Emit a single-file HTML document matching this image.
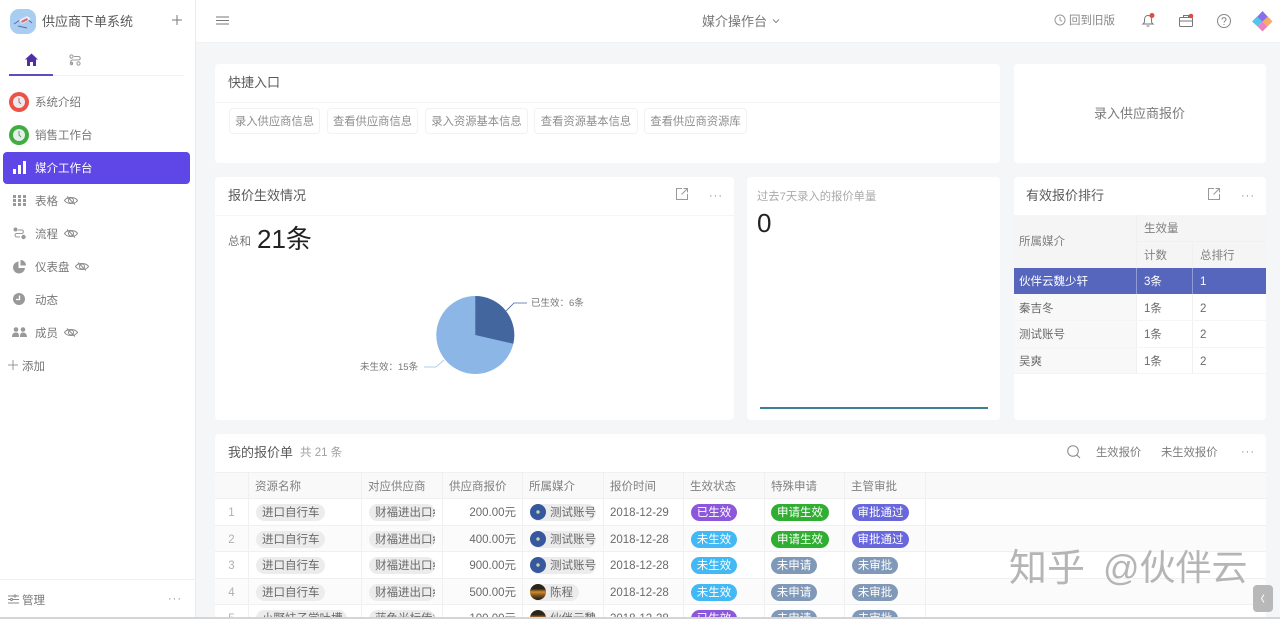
<!DOCTYPE html>
<html lang="zh"><head><meta charset="utf-8"><title>供应商下单系统</title>
<style>
*{box-sizing:border-box}
html,body{margin:0;padding:0;width:1280px;height:619px;overflow:hidden;background:#f5f6f8}
body{position:relative;font-family:"Liberation Sans","Noto Sans CJK SC",sans-serif;font-size:11.5px;color:#666;filter:blur(.3px)}
.a{position:absolute;white-space:nowrap;line-height:1}
.card{position:absolute;background:#fff;border-radius:4px}
svg{position:absolute;overflow:visible}
.nav{position:absolute;left:35px;font-size:11.5px;color:#777;line-height:14px;white-space:nowrap}
.qb{position:absolute;top:108px;height:26px;border:1px solid #f2f2f2;border-radius:4px;font-size:11.3px;color:#8e8e8e;line-height:26px;text-align:center;white-space:nowrap}
.r{position:absolute;left:215px;width:1051px;height:1px;background:#f0f0f0}
.v{position:absolute;width:1px;background:#f0f0f0}
.rowbg{position:absolute;left:215px;width:1051px;background:#fbfbfb}
.th{position:absolute;top:481px;font-size:11.5px;color:#808080;line-height:13px;white-space:nowrap}
.idx{position:absolute;left:215px;width:33px;text-align:center;color:#b0b0b0;font-size:11.5px;line-height:14px;margin-top:1px}
.pill{position:absolute;height:17px;border-radius:9px;background:#ececec;color:#6a6a6a;font-size:11.5px;line-height:18px;white-space:nowrap;overflow:hidden}
.price{position:absolute;left:442px;width:74px;text-align:right;color:#6a6a6a;font-size:11.5px;line-height:14px;margin-top:1px}
.date{position:absolute;left:610px;color:#6a6a6a;font-size:11.5px;line-height:14px;white-space:nowrap;margin-top:1px}
.tag{position:absolute;height:17px;border-radius:9px;color:#fff;font-size:11.5px;line-height:18px;text-align:center;white-space:nowrap;overflow:hidden}
.p{background:#8d57dc}.b{background:#42b8f4}.g{background:#2fae31}.i{background:#6867dc}.s{background:#8199b8}
.av{position:absolute;width:16px;height:16px;border-radius:50%;background:radial-gradient(circle,#b9d3a8 0 1.5px,#37589f 2px)}
.av2{background:linear-gradient(#2b241a 0 30%,#d78a28 50%,#6b4a22 75%,#1e1a12)}
.rk{position:absolute;font-size:11.5px;color:#6a6a6a;line-height:14px;white-space:nowrap;margin-top:1px}
</style></head><body>

<!-- top bar -->
<div style="position:absolute;left:196px;top:0;width:1084px;height:43px;background:#fff;border-bottom:1px solid #f0f1f3"></div>
<!-- sidebar -->
<div style="position:absolute;left:0;top:0;width:196px;height:619px;background:#fff;border-right:1px solid #eaebee"></div>
<div style="position:absolute;left:10px;top:9px;width:26px;height:25px;border-radius:9px;background:#a9cdf0"></div>
<svg style="left:10px;top:9px" width="26" height="25"><path d="M4 15l6-4M16 9l6 5M8 17l9 2" stroke="#5b6f9c" stroke-width="1" fill="none"/><path d="M9 11l8-4 4 3-9 5z" fill="#e9eef8"/><path d="M11 12l6-3 1 2-6 3z" fill="#d96a78"/></svg>
<div class="a" style="left:42px;top:15px;font-size:13px;color:#5a5a5a">供应商下单系统</div>
<svg style="left:171px;top:14px" width="12" height="12"><path d="M6 1v10M1 6h10" stroke="#777" stroke-width="1"/></svg>
<svg style="left:25px;top:53px" width="13" height="13"><path d="M6.500 .5L13 6.500h-2V13H8V9H5v4H2V6.500H0z" fill="#4f2fa8"/></svg>
<svg style="left:69px;top:54px" width="12" height="12" fill="none" stroke="#999" stroke-width="1"><circle cx="2.500" cy="2.500" r="1.600"/><circle cx="9.500" cy="9.500" r="1.600"/><circle cx="2.500" cy="9.500" r="1.200"/><path d="M5 2.500h4.500a1.500 1.500 0 0 1 0 3.500h-6a1.500 1.500 0 0 0 0 3.500"/></svg>
<div style="position:absolute;left:9px;top:75px;width:175px;height:1px;background:#f2f2f2"></div>
<div style="position:absolute;left:9px;top:74px;width:44px;height:2px;background:#5f4cc0"></div>

<div style="position:absolute;left:9px;top:92px;width:20px;height:20px;border-radius:50%;background:#ec5245"></div>
<div style="position:absolute;left:13px;top:96px;width:12px;height:12px;border-radius:50%;background:#e9edf0"></div>
<svg style="left:13px;top:96px" width="12" height="12"><path d="M6 2v4l2 2" stroke="#d85a50" stroke-width="1" fill="none"/></svg>
<div class="nav" style="top:96px">系统介绍</div>
<div style="position:absolute;left:9px;top:125px;width:20px;height:20px;border-radius:50%;background:#3fae3f"></div>
<div style="position:absolute;left:13px;top:129px;width:12px;height:12px;border-radius:50%;background:#e9edf0"></div>
<svg style="left:13px;top:129px" width="12" height="12"><path d="M6 2v4l2 2" stroke="#58a858" stroke-width="1" fill="none"/></svg>
<div class="nav" style="top:129px">销售工作台</div>
<div style="position:absolute;left:3px;top:152px;width:187px;height:32px;border-radius:4px;background:#5f46e6"></div>
<svg style="left:13px;top:160px" width="13" height="15" fill="#fff"><rect x="0" y="9" width="3" height="5"/><rect x="5" y="5" width="3" height="9"/><rect x="10" y="1" width="3" height="13"/></svg>
<div class="nav" style="top:162px;color:#fff">媒介工作台</div>

<svg style="left:13px;top:195px" width="13" height="11" fill="#999"><rect width="3" height="3"/><rect x="5" width="3" height="3"/><rect x="10" width="3" height="3"/><rect y="4" width="3" height="3"/><rect x="5" y="4" width="3" height="3"/><rect x="10" y="4" width="3" height="3"/><rect y="8" width="3" height="3"/><rect x="5" y="8" width="3" height="3"/><rect x="10" y="8" width="3" height="3"/></svg>
<div class="nav" style="top:195px">表格</div>
<svg style="left:64px;top:195px" width="14" height="11" fill="none" stroke="#888"><path d="M.5 5.500C3 1.500 11 1.500 13.500 5.500C11 9.500 3 9.500 .5 5.500z"/><circle cx="7" cy="5.500" r="2.500"/><path d="M3 1.500l8 8"/></svg>
<svg style="left:13px;top:227px" width="13" height="13"><circle cx="2.500" cy="2.500" r="2" fill="#999"/><circle cx="10.500" cy="10" r="2.200" fill="#999"/><path d="M5 3h4a1.800 1.800 0 0 1 0 3.500H3.500a1.800 1.800 0 0 0 0 3.500H7" stroke="#999" fill="none"/></svg>
<div class="nav" style="top:228px">流程</div>
<svg style="left:64px;top:228px" width="14" height="11" fill="none" stroke="#888"><path d="M.5 5.500C3 1.500 11 1.500 13.500 5.500C11 9.500 3 9.500 .5 5.500z"/><circle cx="7" cy="5.500" r="2.500"/><path d="M3 1.500l8 8"/></svg>
<svg style="left:13px;top:260px" width="13" height="13" fill="#999"><path d="M5.500 1.500v6.500h6.500A6 6 0 1 1 5.500 1.500z"/><path d="M7.500 0a5.500 5.500 0 0 1 5.500 5.500H7.500z"/></svg>
<div class="nav" style="top:261px">仪表盘</div>
<svg style="left:75px;top:261px" width="14" height="11" fill="none" stroke="#888"><path d="M.5 5.500C3 1.500 11 1.500 13.500 5.500C11 9.500 3 9.500 .5 5.500z"/><circle cx="7" cy="5.500" r="2.500"/><path d="M3 1.500l8 8"/></svg>
<svg style="left:13px;top:293px" width="12" height="12"><circle cx="6" cy="6" r="6" fill="#999"/><path d="M6.500 2.500V6.500H3" stroke="#fff" stroke-width="1.300" fill="none"/></svg>
<div class="nav" style="top:294px">动态</div>
<svg style="left:12px;top:327px" width="15" height="11" fill="#999"><circle cx="4" cy="2.500" r="2.300"/><circle cx="11" cy="2.500" r="2.300"/><path d="M0 10c0-3 1.500-4.500 4-4.500S7 7 7 10zM8 10c0-3 .8-4.500 3-4.500S15 7 15 10z"/></svg>
<div class="nav" style="top:327px">成员</div>
<svg style="left:64px;top:327px" width="14" height="11" fill="none" stroke="#888"><path d="M.5 5.500C3 1.500 11 1.500 13.500 5.500C11 9.500 3 9.500 .5 5.500z"/><circle cx="7" cy="5.500" r="2.500"/><path d="M3 1.500l8 8"/></svg>
<svg style="left:8px;top:360px" width="10" height="10"><path d="M5 0v10M0 5h10" stroke="#999"/></svg>
<div class="nav" style="left:22px;top:360px">添加</div>
<div style="position:absolute;left:0;top:579px;width:195px;height:1px;background:#f0f0f0"></div>
<svg style="left:8px;top:594px" width="11" height="11" stroke="#888" fill="none"><path d="M0 2h11M0 5.500h11M0 9h11"/><circle cx="7" cy="2" r="1" fill="#fff"/><circle cx="3.500" cy="5.500" r="1" fill="#fff"/></svg>
<div class="nav" style="left:22px;top:594px">管理</div>
<div class="a" style="left:168px;top:594px;font-size:11px;color:#888;letter-spacing:1px">···</div>

<!-- top bar content -->
<svg style="left:216px;top:16px" width="13" height="10" stroke="#777"><path d="M0 1h13M0 4.500h13M0 8h13"/></svg>
<div class="a" style="left:702px;top:15px;font-size:13px;color:#777">媒介操作台</div>
<svg style="left:772px;top:19px" width="8" height="5" fill="none" stroke="#888"><path d="M1 .5l3 3 3-3"/></svg>
<svg style="left:1054px;top:14px" width="12" height="12" fill="none" stroke="#999"><circle cx="6" cy="6" r="5"/><path d="M6 3v3l2 1.500"/></svg>
<div class="a" style="left:1069px;top:16px;font-size:11.5px;color:#888">回到旧版</div>
<svg style="left:1141px;top:13px" width="15" height="15" fill="none" stroke="#777"><path d="M2 11c1.500-1 1.500-2 1.500-4.500S5 2.500 7 2.500s3.500 1.500 3.500 4S10.500 10 12 11zM5.500 13h3"/><circle cx="11" cy="2.500" r="2.500" fill="#df4b45" stroke="none"/></svg>
<svg style="left:1179px;top:14px" width="15" height="13" fill="none" stroke="#777"><rect x=".5" y="3.500" width="13" height="9" rx="1"/><path d="M.5 7h13M4.500 3.500v-2h5v2"/><circle cx="12" cy="2" r="2.300" fill="#df4b45" stroke="none"/></svg>
<svg style="left:1217px;top:14px" width="14" height="14" fill="none" stroke="#888"><circle cx="7" cy="7" r="6.500"/><path d="M5 5.500c0-2.500 4-2.500 4 0C9 7 7 7 7 8.700M7 10v1"/></svg>
<svg style="left:1252px;top:11px" width="21" height="21"><path d="M10.500 0l5.500 6-5.500 5.500L5 6z" fill="#8a6fe8"/><path d="M5 5.500l5.500 5-5 5L0 10.500z" fill="#56c3e8"/><path d="M16 5.500l4.500 5-5 5-5-5z" fill="#f6ab6a"/><path d="M10.500 10.500l5 5-5 5-5-5z" fill="#e884c0"/></svg>

<!-- quick entry -->
<div class="card" style="left:215px;top:64px;width:785px;height:99px"></div>
<div style="position:absolute;left:215px;top:102px;width:785px;height:1px;background:#f5f5f5"></div>
<div class="a" style="left:228px;top:76px;font-size:13px;color:#5a5a5a">快捷入口</div>
<div class="qb" style="left:229px;width:91px">录入供应商信息</div>
<div class="qb" style="left:327px;width:91px">查看供应商信息</div>
<div class="qb" style="left:425px;width:103px">录入资源基本信息</div>
<div class="qb" style="left:534px;width:104px">查看资源基本信息</div>
<div class="qb" style="left:644px;width:103px">查看供应商资源库</div>
<div class="card" style="left:1014px;top:64px;width:252px;height:99px"></div>
<div class="a" style="left:1094px;top:107px;font-size:13px;color:#7a7a7a">录入供应商报价</div>

<!-- quote status -->
<div class="card" style="left:215px;top:177px;width:519px;height:243px"></div>
<div style="position:absolute;left:215px;top:215px;width:519px;height:1px;background:#f5f5f5"></div>
<div class="a" style="left:228px;top:189px;font-size:13px;color:#5a5a5a">报价生效情况</div>
<svg style="left:676px;top:188px" width="12" height="12" fill="none" stroke="#999"><path d="M6 .5H.5v11h11V6M5.500 6.500l6-6M7.500.5h4v4"/></svg>
<div class="a" style="left:709px;top:191px;font-size:11px;color:#888;letter-spacing:1px">···</div>
<div class="a" style="left:228px;top:237px;font-size:11.5px;color:#777">总和</div>
<div class="a" style="left:257px;top:226px;font-size:26px;color:#222">21条</div>
<svg style="left:340px;top:280px" width="270" height="110">
<circle cx="135.300" cy="55" r="39" fill="#8cb6e6"/>
<path d="M135.300 55V16A39 39 0 0 1 173.300 63.700z" fill="#43669f"/>
<path d="M166 31l8-8h13" fill="none" stroke="#43669f" stroke-width=".8"/>
<path d="M104 80l-8 7H84" fill="none" stroke="#9bbbdf" stroke-width=".8"/>
<text x="191" y="26" font-size="9.500" fill="#777" font-family="Liberation Sans,Noto Sans CJK SC,sans-serif">已生效：6条</text>
<text x="20" y="90" font-size="9.500" fill="#777" font-family="Liberation Sans,Noto Sans CJK SC,sans-serif">未生效：15条</text>
</svg>

<!-- past 7 days -->
<div class="card" style="left:747px;top:177px;width:253px;height:243px"></div>
<div class="a" style="left:757px;top:192px;font-size:11.3px;color:#aaa">过去7天录入的报价单量</div>
<div class="a" style="left:757px;top:210px;font-size:26px;color:#222">0</div>
<div style="position:absolute;left:760px;top:407px;width:228px;height:2px;background:#3d7f95"></div>

<!-- ranking -->
<div class="card" style="left:1014px;top:177px;width:252px;height:243px"></div>
<div class="a" style="left:1026px;top:189px;font-size:13px;color:#5a5a5a">有效报价排行</div>
<svg style="left:1208px;top:188px" width="12" height="12" fill="none" stroke="#999"><path d="M6 .5H.5v11h11V6M5.500 6.500l6-6M7.500.5h4v4"/></svg>
<div class="a" style="left:1241px;top:191px;font-size:11px;color:#888;letter-spacing:1px">···</div>
<div style="position:absolute;left:1014px;top:215px;width:252px;height:53px;background:#f5f5f5"></div>
<div style="position:absolute;left:1014px;top:294px;width:122px;height:80px;background:#f8f8f8"></div>
<div style="position:absolute;left:1014px;top:268px;width:252px;height:26px;background:#5766bd"></div>
<div style="position:absolute;left:1136px;top:215px;width:1px;height:159px;background:#f0f0f0"></div>
<div style="position:absolute;left:1192px;top:241px;width:1px;height:133px;background:#f0f0f0"></div>
<div style="position:absolute;left:1136px;top:268px;width:1px;height:26px;background:#8f9ad6"></div>
<div style="position:absolute;left:1192px;top:268px;width:1px;height:26px;background:#8f9ad6"></div>
<div style="position:absolute;left:1137px;top:241px;width:129px;height:1px;background:#f0f0f0"></div>
<div style="position:absolute;left:1014px;top:320px;width:252px;height:1px;background:#f5f5f5"></div>
<div style="position:absolute;left:1014px;top:347px;width:252px;height:1px;background:#f5f5f5"></div>
<div style="position:absolute;left:1014px;top:373px;width:252px;height:1px;background:#f5f5f5"></div>
<div class="rk" style="left:1019px;top:234px;color:#808080">所属媒介</div>
<div class="rk" style="left:1144px;top:221px;color:#808080">生效量</div>
<div class="rk" style="left:1144px;top:248px;color:#808080">计数</div>
<div class="rk" style="left:1200px;top:248px;color:#808080">总排行</div>
<div class="rk" style="left:1019px;top:274px;color:#fff">伙伴云魏少轩</div>
<div class="rk" style="left:1144px;top:274px;color:#fff">3条</div>
<div class="rk" style="left:1200px;top:274px;color:#fff">1</div>
<div class="rk" style="left:1019px;top:301px">秦吉冬</div><div class="rk" style="left:1144px;top:301px">1条</div><div class="rk" style="left:1200px;top:301px">2</div>
<div class="rk" style="left:1019px;top:327px">测试账号</div><div class="rk" style="left:1144px;top:327px">1条</div><div class="rk" style="left:1200px;top:327px">2</div>
<div class="rk" style="left:1019px;top:354px">吴爽</div><div class="rk" style="left:1144px;top:354px">1条</div><div class="rk" style="left:1200px;top:354px">2</div>

<!-- table -->
<div class="card" style="left:215px;top:434px;width:1051px;height:185px"></div>
<div class="a" style="left:228px;top:446px;font-size:13px;color:#5a5a5a">我的报价单</div>
<div class="a" style="left:300px;top:448px;font-size:11.5px;color:#a0a0a0">共 21 条</div>
<svg style="left:1067px;top:445px" width="14" height="14" fill="none" stroke="#888"><circle cx="6" cy="6" r="5.300"/><path d="M10 10l3 3"/></svg>
<div class="a" style="left:1096px;top:448px;font-size:11.3px;color:#7c7c7c">生效报价</div>
<div class="a" style="left:1161px;top:448px;font-size:11.3px;color:#7c7c7c">未生效报价</div>
<div class="a" style="left:1241px;top:447px;font-size:11px;color:#888;letter-spacing:1px">···</div>

<div class="rowbg" style="top:473px;height:26px;background:#f9f9f9"></div>
<div class="rowbg" style="top:526px;height:26px"></div>
<div class="rowbg" style="top:579px;height:26px"></div>
<div class="r" style="top:472px"></div><div class="r" style="top:498px"></div><div class="r" style="top:525px"></div><div class="r" style="top:551px"></div><div class="r" style="top:578px"></div><div class="r" style="top:604px"></div>
<div class="v" style="left:248px;top:473px;height:146px"></div><div class="v" style="left:361px;top:473px;height:146px"></div><div class="v" style="left:442px;top:473px;height:146px"></div><div class="v" style="left:522px;top:473px;height:146px"></div><div class="v" style="left:603px;top:473px;height:146px"></div><div class="v" style="left:683px;top:473px;height:146px"></div><div class="v" style="left:764px;top:473px;height:146px"></div><div class="v" style="left:844px;top:473px;height:146px"></div><div class="v" style="left:925px;top:473px;height:146px"></div>

<div class="th" style="left:255px">资源名称</div><div class="th" style="left:368px">对应供应商</div><div class="th" style="left:449px">供应商报价</div><div class="th" style="left:529px">所属媒介</div><div class="th" style="left:610px">报价时间</div><div class="th" style="left:690px">生效状态</div><div class="th" style="left:771px">特殊申请</div><div class="th" style="left:851px">主管审批</div>

<!-- row 1 -->
<div class="idx" style="top:505px">1</div>
<div class="pill" style="left:256px;top:504px;width:69px;padding-left:6px">进口自行车</div>
<div class="pill" style="left:369px;top:504px;width:66px;padding-left:6px">财福进出口红</div>
<div class="price" style="top:505px">200.00元</div>
<div class="pill" style="left:530px;top:504px;width:66px;padding-left:20px">测试账号</div><div class="av" style="left:530px;top:504px"></div>
<div class="date" style="top:505px">2018-12-29</div>
<div class="tag p" style="left:691px;top:504px;width:46px">已生效</div><div class="tag g" style="left:771px;top:504px;width:58px">申请生效</div><div class="tag i" style="left:852px;top:504px;width:57px">审批通过</div>
<!-- row 2 -->
<div class="idx" style="top:532px">2</div>
<div class="pill" style="left:256px;top:531px;width:69px;padding-left:6px">进口自行车</div>
<div class="pill" style="left:369px;top:531px;width:66px;padding-left:6px">财福进出口红</div>
<div class="price" style="top:532px">400.00元</div>
<div class="pill" style="left:530px;top:531px;width:66px;padding-left:20px">测试账号</div><div class="av" style="left:530px;top:531px"></div>
<div class="date" style="top:532px">2018-12-28</div>
<div class="tag b" style="left:691px;top:531px;width:46px">未生效</div><div class="tag g" style="left:771px;top:531px;width:58px">申请生效</div><div class="tag i" style="left:852px;top:531px;width:57px">审批通过</div>
<!-- row 3 -->
<div class="idx" style="top:558px">3</div>
<div class="pill" style="left:256px;top:557px;width:69px;padding-left:6px">进口自行车</div>
<div class="pill" style="left:369px;top:557px;width:66px;padding-left:6px">财福进出口红</div>
<div class="price" style="top:558px">900.00元</div>
<div class="pill" style="left:530px;top:557px;width:66px;padding-left:20px">测试账号</div><div class="av" style="left:530px;top:557px"></div>
<div class="date" style="top:558px">2018-12-28</div>
<div class="tag b" style="left:691px;top:557px;width:46px">未生效</div><div class="tag s" style="left:771px;top:557px;width:46px">未申请</div><div class="tag s" style="left:852px;top:557px;width:46px">未审批</div>
<!-- row 4 -->
<div class="idx" style="top:585px">4</div>
<div class="pill" style="left:256px;top:584px;width:69px;padding-left:6px">进口自行车</div>
<div class="pill" style="left:369px;top:584px;width:66px;padding-left:6px">财福进出口红</div>
<div class="price" style="top:585px">500.00元</div>
<div class="pill" style="left:530px;top:584px;width:49px;padding-left:20px">陈程</div><div class="av av2" style="left:530px;top:584px"></div>
<div class="date" style="top:585px">2018-12-28</div>
<div class="tag b" style="left:691px;top:584px;width:46px">未生效</div><div class="tag s" style="left:771px;top:584px;width:46px">未申请</div><div class="tag s" style="left:852px;top:584px;width:46px">未审批</div>
<!-- row 5 -->
<div class="idx" style="top:611px">5</div>
<div class="pill" style="left:256px;top:610px;width:91px;padding-left:6px">小野妹子学吐槽</div>
<div class="pill" style="left:369px;top:610px;width:66px;padding-left:6px">蓝色光标传播</div>
<div class="price" style="top:611px">100.00元</div>
<div class="pill" style="left:530px;top:610px;width:66px;padding-left:20px">伙伴云魏</div><div class="av av2" style="left:530px;top:610px"></div>
<div class="date" style="top:611px">2018-12-28</div>
<div class="tag p" style="left:691px;top:610px;width:46px">已生效</div><div class="tag s" style="left:771px;top:610px;width:46px">未申请</div><div class="tag s" style="left:852px;top:610px;width:46px">未审批</div>

<!-- watermark -->
<div class="a" style="left:1009px;top:550px;font-size:38px;color:#b5b5b5;text-shadow:1px 1px 0 rgba(255,255,255,.8)">知乎</div>
<div class="a" style="left:1103px;top:550px;font-size:36px;color:#b5b5b5;text-shadow:1px 1px 0 rgba(255,255,255,.8)">@伙伴云</div>
<div style="position:absolute;left:1253px;top:585px;width:20px;height:27px;border-radius:4px;background:#b8b8b8"></div>
<svg style="left:1260px;top:594px" width="5" height="9" fill="none" stroke="#fff"><path d="M4 .5L1.500 4.500 4 8.500"/></svg>
<!-- bottom edge -->
<div style="position:absolute;left:0;top:617px;width:1280px;height:2px;background:#d5d5d5"></div>
</body></html>
